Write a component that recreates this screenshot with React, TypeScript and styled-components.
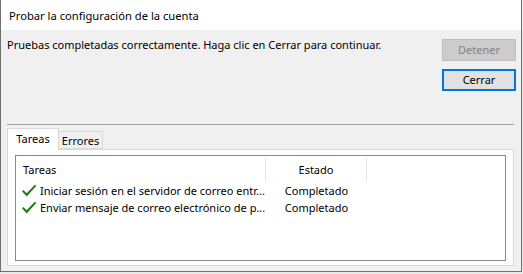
import React from 'react';
import styled, { createGlobalStyle } from 'styled-components';

const Global = createGlobalStyle`
  html, body { margin: 0; padding: 0; background: #e9e9e9; }
  body {
    font-family: "Segoe UI", "Noto Sans", sans-serif;
    font-size: 11px;
    color: #000;
  }
  * { box-sizing: border-box; }
`;

const Window = styled.div`
  width: 522px;
  height: 272px;
  border: 1px solid #707070;
  border-top: none;
  background: #f0f0f0;
  display: flex;
  flex-direction: column;
`;

const TitleBar = styled.div`
  height: 30px;
  flex: none;
  background: #fff;
  display: flex;
  align-items: center;
  padding-left: 8px;
  padding-top: 1px;
  font-size: 11.2px;
  line-height: 16px;
`;

const TopRow = styled.div`
  display: flex;
  justify-content: space-between;
  align-items: flex-start;
  padding: 0 5px 0 6px;
`;

const Message = styled.div`
  padding-top: 7px;
  line-height: 16px;
  white-space: nowrap;
`;

const ButtonStack = styled.div`
  display: flex;
  flex-direction: column;
  gap: 8px;
  padding-top: 9px;
`;

const Button = styled.button<{ $primary?: boolean }>`
  width: 74px;
  height: 22px;
  padding: 0 0 1px 0;
  font-family: inherit;
  font-size: 11px;
  line-height: 16px;
  background: ${(p) => (p.disabled ? '#cccccc' : '#e1e1e1')};
  color: ${(p) => (p.disabled ? '#838383' : '#000')};
  border: ${(p) => (p.$primary ? '2px solid #0078d7' : p.disabled ? '1px solid #bfbfbf' : '1px solid #adadad')};
`;

const Separator = styled.div`
  height: 1px;
  margin: 33px 7px 0 6px;
  background: #a0a0a0;
`;

const TabArea = styled.div`
  margin: 3px 7px 0 6px;
  display: flex;
  flex-direction: column;
`;

const TabStrip = styled.div`
  display: flex;
  align-items: flex-end;
  height: 21px;
  position: relative;
  z-index: 1;
`;

const Tab = styled.div<{ $active?: boolean }>`
  display: flex;
  align-items: center;
  justify-content: center;
  line-height: 16px;
  border: 1px solid #d9d9d9;
  border-bottom: ${(p) => (p.$active ? 'none' : '1px solid #d9d9d9')};
  background: ${(p) => (p.$active ? '#fff' : '#f0f0f0')};
  height: ${(p) => (p.$active ? '22px' : '18px')};
  margin-bottom: ${(p) => (p.$active ? '-1px' : '0')};
  padding: ${(p) => (p.$active ? '0 0 2px 0' : '1px 0 0 0')};
  width: ${(p) => (p.$active ? '52px' : '45px')};
  margin-left: ${(p) => (p.$active ? '0' : '-1px')};
  position: relative;
  z-index: ${(p) => (p.$active ? 2 : 1)};
`;

const Panel = styled.div`
  height: 117px;
  background: #fff;
  border: 1px solid #d9d9d9;
  padding: 5px 7px 4px 7px;
  display: flex;
`;

const ListView = styled.div`
  flex: 1;
  border: 1px solid #828790;
  background: #fff;
  display: flex;
  flex-direction: column;
`;

const HeaderRow = styled.div`
  display: flex;
  height: 26px;
  padding-top: 1px;
`;

const HeaderCell = styled.div<{ $w: number; $center?: boolean }>`
  width: ${(p) => p.$w}px;
  flex: none;
  display: flex;
  align-items: center;
  justify-content: ${(p) => (p.$center ? 'center' : 'flex-start')};
  padding-left: ${(p) => (p.$center ? '0' : '7px')};
  border-right: 1px solid #e5e5e5;
  line-height: 16px;
`;

const Row = styled.div`
  display: flex;
  height: 17px;
  align-items: center;
`;

const NameCell = styled.div`
  width: 250px;
  flex: none;
  display: flex;
  align-items: center;
  padding-left: 5px;
  gap: 3px;
  overflow: hidden;
  white-space: nowrap;
  line-height: 16px;
`;

const StatusCell = styled.div`
  width: 101px;
  flex: none;
  text-align: center;
  line-height: 16px;
  white-space: nowrap;
`;

const CheckIcon = () => (
  <svg width="16" height="16" viewBox="0 0 16 16" style={{ flex: 'none' }}>
    <path d="M1 8.3 L2.6 6.9 L5.6 10.3 L13.8 1.8 L15.3 3 L5.7 13.4 Z" fill="#1e7f1e" />
  </svg>
);

const tasks = [
  'Iniciar sesión en el servidor de correo entr...',
  'Enviar mensaje de correo electrónico de p...',
];

export default function App() {
  return (
    <>
      <Global />
      <Window>
        <TitleBar>Probar la configuración de la cuenta</TitleBar>
        <TopRow>
          <Message>Pruebas completadas correctamente. Haga clic en Cerrar para continuar.</Message>
          <ButtonStack>
            <Button disabled>Detener</Button>
            <Button $primary>Cerrar</Button>
          </ButtonStack>
        </TopRow>
        <Separator />
        <TabArea>
          <TabStrip>
            <Tab $active>Tareas</Tab>
            <Tab>Errores</Tab>
          </TabStrip>
          <Panel>
            <ListView>
              <HeaderRow>
                <HeaderCell $w={250}>Tareas</HeaderCell>
                <HeaderCell $w={101} $center>Estado</HeaderCell>
              </HeaderRow>
              {tasks.map((t) => (
                <Row key={t}>
                  <NameCell>
                    <CheckIcon />
                    <span>{t}</span>
                  </NameCell>
                  <StatusCell>Completado</StatusCell>
                </Row>
              ))}
            </ListView>
          </Panel>
        </TabArea>
      </Window>
    </>
  );
}
